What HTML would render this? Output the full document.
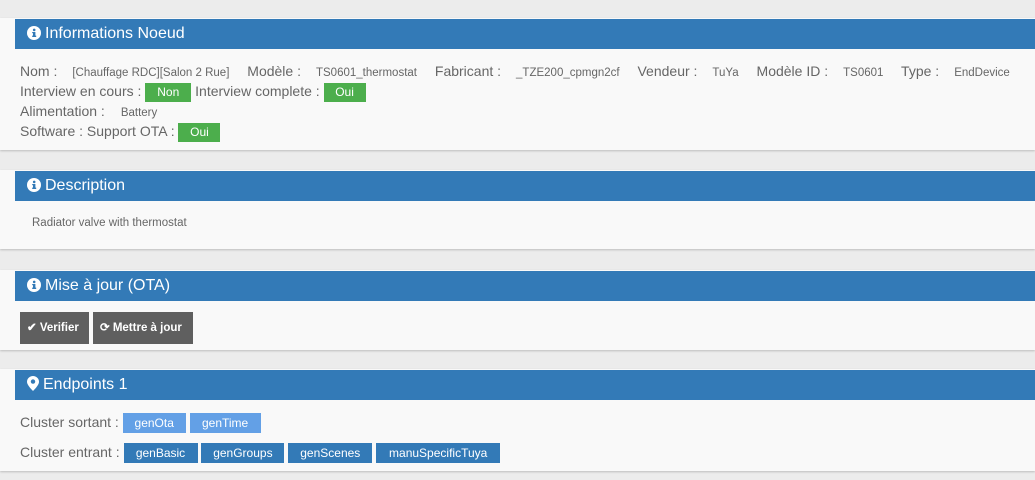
<!DOCTYPE html>
<html><head><meta charset="utf-8"><style>
*{margin:0;padding:0;box-sizing:border-box}
body{width:1035px;height:480px;background:#ececec;font-family:"Liberation Sans",sans-serif;color:#666;position:relative;overflow:hidden}
.p{position:absolute;left:0;width:1035px;background:#f9f9f9;box-shadow:0 1px 2px rgba(0,0,0,.2)}
.h{position:absolute;left:15px;right:0;height:30px;background:#337ab7;color:#fff;font-size:16px;line-height:30px;padding-left:12px}
.h svg{vertical-align:-2px;margin-right:4px}
.t{position:absolute;font-size:14px;white-space:nowrap;line-height:20px}
.s{font-size:11.5px;margin:0 14px 0 15px}
.b{display:inline-block;color:#fff;font-size:12px;text-align:center;line-height:19px;height:19px;vertical-align:middle}
.g{background:#4cae4c}
.btn{position:absolute;top:42px;height:32px;background:#5f5f5f;color:#fff;font-size:12px;line-height:32px;padding:0 7px}
</style></head><body>
<div class="p" style="top:18px;height:132px">
 <div class="h" style="top:1px"><svg width="14" height="14" viewBox="0 0 14 14"><circle cx="7" cy="7" r="7" fill="#fff"/><rect x="6" y="6" width="2.4" height="5" fill="#337ab7"/><rect x="5.2" y="9.6" width="4" height="1.4" fill="#337ab7"/><rect x="5.2" y="6" width="2" height="1.2" fill="#337ab7"/><circle cx="7.2" cy="3.9" r="1.3" fill="#337ab7"/></svg>Informations Noeud</div>
 <div class="t" style="left:20px;top:43px">Nom :<span class="s">[Chauffage RDC][Salon 2 Rue]</span> Modèle :<span class="s">TS0601_thermostat</span> Fabricant :<span class="s">_TZE200_cpmgn2cf</span> Vendeur :<span class="s">TuYa</span> Modèle ID :<span class="s">TS0601</span> Type :<span class="s">EndDevice</span></div>
 <div class="t" style="left:20px;top:63px">Interview en cours : <span class="b g" style="width:46px">Non</span> Interview complete : <span class="b g" style="width:42px">Oui</span></div>
 <div class="t" style="left:20px;top:83px">Alimentation :<span class="s" style="margin-left:16px">Battery</span></div>
 <div class="t" style="left:20px;top:103px">Software : Support OTA : <span class="b g" style="width:42px">Oui</span></div>
</div>
<div class="p" style="top:170px;height:79px">
 <div class="h" style="top:1px"><svg width="14" height="14" viewBox="0 0 14 14"><circle cx="7" cy="7" r="7" fill="#fff"/><rect x="6" y="6" width="2.4" height="5" fill="#337ab7"/><rect x="5.2" y="9.6" width="4" height="1.4" fill="#337ab7"/><rect x="5.2" y="6" width="2" height="1.2" fill="#337ab7"/><circle cx="7.2" cy="3.9" r="1.3" fill="#337ab7"/></svg>Description</div>
 <div class="t" style="left:32px;top:43px;font-size:11.5px">Radiator valve with thermostat</div>
</div>
<div class="p" style="top:270px;height:80px">
 <div class="h" style="top:1px"><svg width="14" height="14" viewBox="0 0 14 14"><circle cx="7" cy="7" r="7" fill="#fff"/><rect x="6" y="6" width="2.4" height="5" fill="#337ab7"/><rect x="5.2" y="9.6" width="4" height="1.4" fill="#337ab7"/><rect x="5.2" y="6" width="2" height="1.2" fill="#337ab7"/><circle cx="7.2" cy="3.9" r="1.3" fill="#337ab7"/></svg>Mise à jour (OTA)</div>
 <div class="btn" style="left:20px;width:69px;font-weight:bold;font-size:11.5px">✔ Verifier</div>
 <div class="btn" style="left:93px;width:100px;font-weight:bold;font-size:11.5px">⟳ Mettre à jour</div>
</div>
<div class="p" style="top:369px;height:102px">
 <div class="h" style="top:1px"><svg width="12" height="15" viewBox="0 0 12 15"><path d="M6 0C2.7 0 0 2.6 0 5.8 0 9.5 6 15 6 15s6-5.5 6-9.2C12 2.6 9.3 0 6 0z" fill="#fff"/><circle cx="6" cy="5.6" r="2.2" fill="#337ab7"/></svg>Endpoints 1</div>
 <div class="t" style="left:20px;top:43px">Cluster sortant : <span class="b" style="background:#63a0e6;width:63px;height:20px;line-height:20px">genOta</span> <span class="b" style="background:#63a0e6;width:71px;height:20px;line-height:20px">genTime</span></div>
 <div class="t" style="left:20px;top:73px">Cluster entrant : <span class="b" style="background:#337ab7;width:74px;height:20px;line-height:20px">genBasic</span> <span class="b" style="background:#337ab7;width:83px;height:20px;line-height:20px">genGroups</span> <span class="b" style="background:#337ab7;width:84px;height:20px;line-height:20px">genScenes</span> <span class="b" style="background:#337ab7;width:124px;height:20px;line-height:20px">manuSpecificTuya</span></div>
</div>
</body></html>
